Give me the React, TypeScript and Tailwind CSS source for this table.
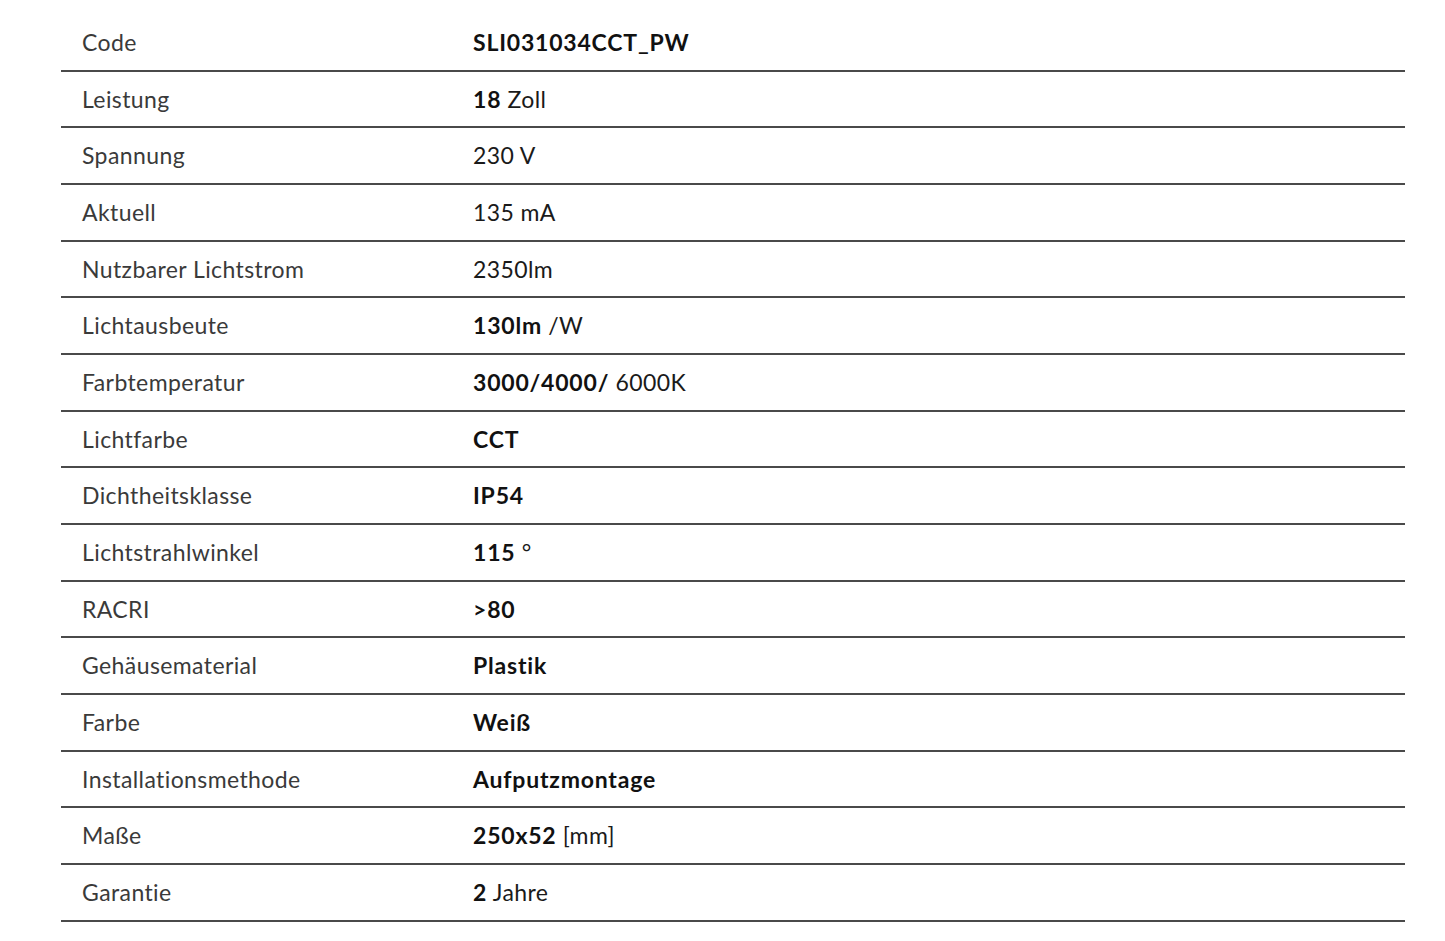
const ROWS: { label: string; value: React.ReactNode }[] = [
  { label: "Code", value: <b>SLI031034CCT_PW</b> },
  { label: "Leistung", value: <><b>18</b> Zoll</> },
  { label: "Spannung", value: <>230 V</> },
  { label: "Aktuell", value: <>135 mA</> },
  { label: "Nutzbarer Lichtstrom", value: <>2350lm</> },
  { label: "Lichtausbeute", value: <><b>130lm</b> /W</> },
  { label: "Farbtemperatur", value: <><b>3000/4000/</b> 6000K</> },
  { label: "Lichtfarbe", value: <b>CCT</b> },
  { label: "Dichtheitsklasse", value: <b>IP54</b> },
  { label: "Lichtstrahlwinkel", value: <><b>115</b> °</> },
  { label: "RACRI", value: <b>&gt;80</b> },
  { label: "Gehäusematerial", value: <b>Plastik</b> },
  { label: "Farbe", value: <b>Weiß</b> },
  { label: "Installationsmethode", value: <b>Aufputzmontage</b> },
  { label: "Maße", value: <><b>250x52</b> [mm]</> },
  { label: "Garantie", value: <><b>2</b> Jahre</> },
]

export default function App() {
  return (
    <div className="min-h-[941px] bg-white pt-[15px] font-['Lato','Open_Sans',sans-serif]">
      <div className="ml-[61px] w-[1344px]">
        {ROWS.map((row) => (
          <div
            key={row.label}
            className="flex h-[56.67px] items-center border-b-2 border-[#4a4a4a] text-[23px] tracking-[0.4px]"
          >
            <div className="w-[412px] pl-[21px] text-[#3a3a3a]">{row.label}</div>
            <div className="text-[#1a1a1a] [&_b]:font-bold [&_b]:tracking-[0.8px] [&_b]:text-[#111]">
              {row.value}
            </div>
          </div>
        ))}
      </div>
    </div>
  )
}
